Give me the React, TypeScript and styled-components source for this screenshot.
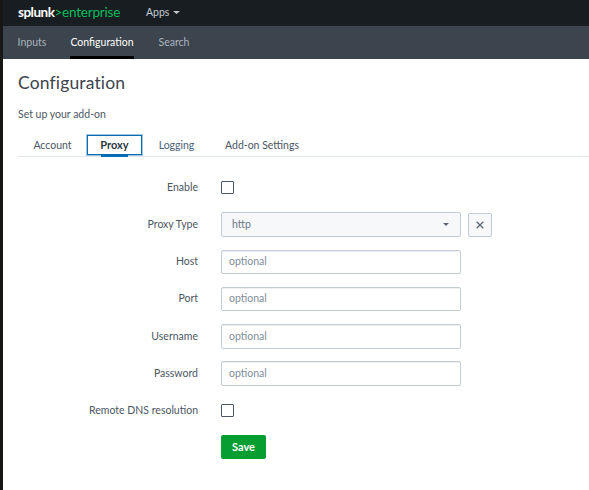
import React from "react";
import styled, { createGlobalStyle } from "styled-components";

const GlobalStyle = createGlobalStyle`
  *, *::before, *::after { box-sizing: border-box; }
  html, body { margin: 0; background: #fff; }
  body { font-family: Lato, "Open Sans", sans-serif; font-size: 10.5px; line-height: 14px; color: #4b5664; overflow: hidden; }
  button, input { font: inherit; letter-spacing: inherit; }
`;

const Page = styled.div`
  height: 490px;
  border-left: 3px solid #191716;
  background: #fff;
`;

const TopBar = styled.header`
  display: flex;
  align-items: center;
  height: 26px;
  padding: 0 0 2px 15px;
  background: #171d21;
`;

const Logo = styled.div`
  display: flex;
  width: 128px;
  color: #fff;
  font-size: 13.5px;
  font-weight: 700;
  letter-spacing: -0.5px;
  white-space: nowrap;
`;

const LogoAccent = styled.span`
  color: #08bd5b;
  font-weight: 400;
  letter-spacing: -0.2px;
`;

const AppsMenu = styled.div`
  display: flex;
  align-items: center;
  gap: 4px;
  color: #c3cbd4;
`;

const NavBar = styled.nav`
  display: flex;
  gap: 24px;
  height: 33px;
  padding-left: 15px;
  background: #3c444d;
`;

const NavItem = styled.a<{ $active?: boolean; $width: number }>`
  flex: none;
  width: ${(p) => p.$width}px;
  height: 33px;
  padding-top: 9px;
  display: flex;
  justify-content: center;
  white-space: nowrap;
  color: ${(p) => (p.$active ? "#fff" : "#abb4bf")};
  border-bottom: 3px solid ${(p) => (p.$active ? "#000" : "transparent")};
`;

const Main = styled.main`
  padding-left: 15px;
`;

const Title = styled.h1`
  margin: 0;
  padding-top: 12px;
  height: 48px;
  font-size: 17.5px;
  font-weight: 400;
  line-height: 24px;
  color: #3c444d;
  letter-spacing: 0.15px;
`;

const Subtitle = styled.p`
  margin: 0;
  height: 28px;
`;

const Tabs = styled.div`
  display: flex;
  height: 22px;
  border-bottom: 1px solid #e1e6eb;
`;

const Tab = styled.div<{ $width: number; $active?: boolean; $link?: boolean }>`
  position: relative;
  width: ${(p) => p.$width}px;
  height: 20px;
  display: flex;
  justify-content: center;
  align-items: center;
  white-space: nowrap;
  flex: none;
  font-weight: ${(p) => (p.$active ? 700 : 400)};
  color: ${(p) => (p.$active ? "#2d3641" : p.$link ? "#4b6377" : "#4b5664")};
  ${(p) =>
    p.$active &&
    `
    font-size: 11px;
    border: 1px solid #096cb0;
    box-shadow: 0 0 0 1px #9bc6e3;
    &::after { content: ""; position: absolute; left: 13px; width: 27px; bottom: -3px; height: 2px; background: #006eb9; }
  `}
`;

const Form = styled.form`
  padding-top: 11px;
`;

const Field = styled.div<{ $height: number }>`
  display: grid;
  grid-template-columns: 180px 240px;
  column-gap: 23px;
  height: ${(p) => p.$height}px;
`;

const Label = styled.label<{ $top?: number }>`
  padding-top: ${(p) => p.$top ?? 12}px;
  text-align: right;
  white-space: nowrap;
`;

const Control = styled.div<{ $top?: number }>`
  display: flex;
  gap: 7px;
  padding-top: ${(p) => p.$top ?? 8}px;
`;

const Checkbox = styled.button`
  width: 13px;
  height: 13px;
  padding: 0;
  background: #fff;
  border: 1px solid #4d5866;
  border-radius: 1px;
`;

const TextInput = styled.input<{ $height: number }>`
  width: 240px;
  height: ${(p) => p.$height}px;
  padding: 0 7px 2px;
  border: 1px solid #c3cbd4;
  border-radius: 2px;
  outline: none;
  box-shadow: inset 0 1px 0 #edf0f3;
  &::placeholder { color: #818d99; opacity: 1; }
`;

const Select = styled.button`
  display: flex;
  flex: none;
  align-items: center;
  justify-content: space-between;
  width: 240px;
  height: 25px;
  padding: 0 11px 1px 10px;
  color: #6b7785;
  background: #f7f8fa;
  border: 1px solid #c3cbd4;
  border-radius: 2px;
`;

const ClearButton = styled.button`
  display: flex;
  flex: none;
  align-items: center;
  justify-content: center;
  width: 24px;
  height: 24px;
  margin-top: 1px;
  padding: 0;
  background: #f7f8fa;
  border: 1px solid #c3cbd4;
  border-radius: 2px;
`;

const SaveButton = styled.button`
  display: block;
  width: 45px;
  height: 24px;
  margin: 0 0 0 203px;
  padding: 0 0 1px;
  background: #069e31;
  color: #fff;
  font-size: 11px;
  font-weight: 700;
  border: 0;
  border-radius: 2px;
`;

const Caret = ({ color, size = 6 }: { color: string; size?: number }) => (
  <svg width={size} height="3" viewBox="0 0 6 3" preserveAspectRatio="none">
    <path d="M0 0h6L3 3z" fill={color} />
  </svg>
);

const textFields = [
  { label: "Host", height: 37, labelTop: 12, inputHeight: 24 },
  { label: "Port", height: 37, labelTop: 12, inputHeight: 24 },
  { label: "Username", height: 37, labelTop: 13, inputHeight: 25 },
  { label: "Password", height: 38, labelTop: 13, inputHeight: 25 },
];

export default function App() {
  return (
    <>
      <GlobalStyle />
      <Page>
        <TopBar>
          <Logo>
            splunk<LogoAccent>&gt;enterprise</LogoAccent>
          </Logo>
          <AppsMenu>
            Apps <Caret color="#c3cbd4" size={7} />
          </AppsMenu>
        </TopBar>
        <NavBar>
          <NavItem $width={28}>Inputs</NavItem>
          <NavItem $width={64} $active>Configuration</NavItem>
          <NavItem $width={32}>Search</NavItem>
        </NavBar>
        <Main>
          <Title>Configuration</Title>
          <Subtitle>Set up your add-on</Subtitle>
          <Tabs>
            <Tab $width={69}>Account</Tab>
            <Tab $width={55} $active>Proxy</Tab>
            <Tab $width={69} $link>Logging</Tab>
            <Tab $width={102}>Add-on Settings</Tab>
          </Tabs>
          <Form>
            <Field $height={36}>
              <Label>Enable</Label>
              <Control $top={13}><Checkbox type="button" aria-label="Enable" /></Control>
            </Field>
            <Field $height={38}>
              <Label $top={13}>Proxy Type</Label>
              <Control>
                <Select type="button">
                  http <Caret color="#5c6773" />
                </Select>
                <ClearButton type="button" aria-label="Clear">
                  <svg width="8" height="8" viewBox="0 0 8 8">
                    <path d="M.7.7 7.3 7.3M7.3.7.7 7.3" stroke="#5c6773" strokeWidth="1.3" />
                  </svg>
                </ClearButton>
              </Control>
            </Field>
            {textFields.map((f) => (
              <Field key={f.label} $height={f.height}>
                <Label $top={f.labelTop}>{f.label}</Label>
                <Control><TextInput $height={f.inputHeight} placeholder="optional" /></Control>
              </Field>
            ))}
            <Field $height={44}>
              <Label>Remote DNS resolution</Label>
              <Control $top={13}><Checkbox type="button" aria-label="Remote DNS resolution" /></Control>
            </Field>
            <SaveButton type="button">Save</SaveButton>
          </Form>
        </Main>
      </Page>
    </>
  );
}
